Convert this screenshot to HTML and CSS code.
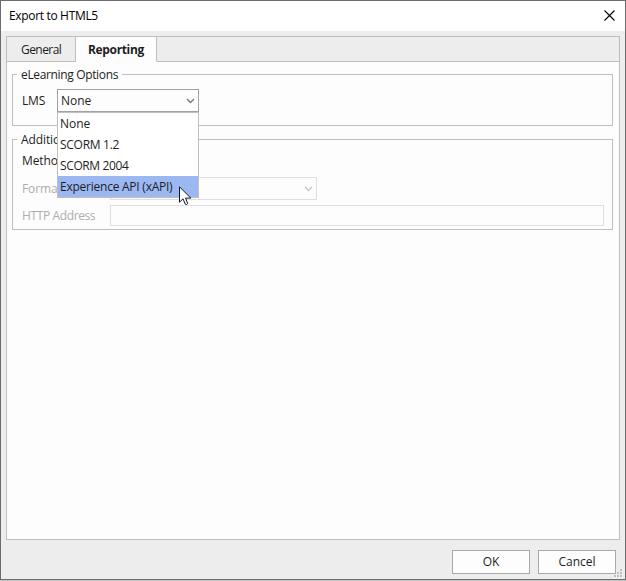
FILE: index.html
```html
<!DOCTYPE html>
<html lang="en">
<head>
<meta charset="utf-8">
<title>Export to HTML5</title>
<link rel="stylesheet" href="styles.css">
</head>
<body>
<div class="window">
  <header class="titlebar">
    <span class="title">Export to HTML5</span>
    <svg class="close" width="11" height="11" viewBox="0 0 11 11"><path d="M.5 .5 10.5 10.5M10.5 .5 .5 10.5"/></svg>
  </header>
  <main class="panel">
    <nav class="tabs">
      <div class="tab"><span class="t-general">General</span></div>
      <div class="tab active"><span class="t-reporting">Reporting</span></div>
      <div class="tab-rest"></div>
    </nav>
    <div class="content">
      <fieldset class="group elearning">
        <legend><span class="t-elearning">eLearning Options</span></legend>
        <div class="row lms">
          <label class="label"><span class="t-lms">LMS</span></label>
          <div class="combo">
            <span>None</span>
            <svg class="chevron" width="9" height="6" viewBox="0 0 9 6"><path d="M1 1 4.5 4.5 8 1"/></svg>
            <ul class="menu">
              <li><span>None</span></li>
              <li><span class="t-s12">SCORM 1.2</span></li>
              <li><span class="t-s2004">SCORM 2004</span></li>
              <li class="selected"><span class="t-xapi">Experience API (xAPI)</span></li>
            </ul>
            <svg class="cursor" width="13" height="20" viewBox="0 0 13 20"><path d="M.5 .8V16.2L4 12.8 6.3 18.2Q7.5 19.2 8.7 17.6L6.6 12.1H11.8Z"/></svg>
          </div>
        </div>
      </fieldset>
      <fieldset class="group additional">
        <legend><span class="t-add">Additional</span></legend>
        <div class="row method"><label class="label"><span class="t-method">Method</span></label></div>
        <div class="row format disabled">
          <label class="label"><span class="t-format">Format</span></label>
          <div class="combo"><svg class="chevron" width="9" height="6" viewBox="0 0 9 6"><path d="M1 1 4.5 4.5 8 1"/></svg></div>
        </div>
        <div class="row address disabled">
          <label class="label"><span class="t-http">HTTP Address</span></label>
          <div class="input"></div>
        </div>
      </fieldset>
    </div>
  </main>
  <footer class="footer">
    <button class="button">OK</button>
    <button class="button">Cancel</button>
    <svg class="grip" width="8" height="8" viewBox="0 0 8 8"><path d="M6 0h2v2h-2zM3 3h2v2h-2zM6 3h2v2h-2zM0 6h2v2h-2zM3 6h2v2h-2zM6 6h2v2h-2z"/></svg>
  </footer>
</div>
</body>
</html>
```
FILE: styles.css
```css
* { box-sizing: border-box; }
body {
  margin: 0;
  background: #c4c4c4;
  font: 12px/16px "Open Sans", "Noto Sans", sans-serif;
  color: #1e1e1e;
}
.window {
  width: 626px;
  height: 580px;
  display: flex;
  flex-direction: column;
  background: #ededed;
  border: 1px solid #6d6b6e;
}
.titlebar {
  height: 30px;
  padding: 0 10px 0 8px;
  display: flex;
  align-items: center;
  justify-content: space-between;
  background: #fff;
  color: #000;
}
span { white-space: nowrap; }
svg { display: block; }
.title { letter-spacing: -.33px; }
.t-general { letter-spacing: -.55px; }
.t-reporting { letter-spacing: -.35px; }
.t-elearning { letter-spacing: -.35px; }
.t-lms { letter-spacing: -.2px; }
.t-s12 { letter-spacing: -.28px; }
.t-s2004 { letter-spacing: -.38px; }
.t-xapi { letter-spacing: -.24px; }
.t-http { letter-spacing: -.38px; }
.t-add, .t-method, .t-format { letter-spacing: -.1px; }
.close { position: relative; top: -1px; }
.close path { fill: none; stroke: #000; stroke-width: 1.1; }
.panel {
  height: 504px;
  margin: 5px 5px 0;
  display: flex;
  flex-direction: column;
  background: #fdfdfd;
  border: 1px solid #bfbfbf;
}
.tabs { height: 25px; display: flex; }
.tab {
  width: 69px;
  display: flex;
  align-items: center;
  padding: 2px 0 0 14px;
  background: #ededed;
  border-right: 1px solid #bfbfbf;
  border-bottom: 1px solid #bfbfbf;
}
.tab.active {
  width: 81px;
  padding-left: 12px;
  background: #fdfdfd;
  border-bottom-color: #fdfdfd;
  font-weight: 700;
}
.tab-rest { flex: 1; background: #ededed; border-bottom: 1px solid #bfbfbf; }
.content { padding: 5px 6px 0 5px; }
.group {
  margin: 0;
  min-width: 0;
  border: 1px solid #bfbfbf;
  padding: 0;
}
.elearning { height: 59px; }
.additional { height: 98px; margin-top: 6px; }
legend { height: 15px; line-height: 15px; margin-left: 4px; padding: 0 4px; }
.row { display: flex; align-items: center; padding-left: 9px; }
.lms { height: 23px; margin-top: 7px; }
.lms .label { width: 35px; }
.combo {
  position: relative;
  width: 142px;
  height: 23px;
  padding: 0 3px;
  display: flex;
  align-items: center;
  background: #fdfdfd;
  border: 1px solid #a3a3a3;
}
.chevron { margin-left: auto; }
.chevron path { fill: none; stroke: #777; stroke-width: 1.3; }
.menu {
  position: absolute;
  z-index: 1;
  top: 22px;
  left: -1px;
  width: 142px;
  height: 86px;
  margin: 0;
  padding: 0;
  list-style: none;
  background: #fff;
  border: 1px solid #bfbfbf;
}
.menu li { height: 21px; padding: 0 2px; display: flex; align-items: center; }
.menu .selected { background: #9cb8f3; }
.cursor { position: absolute; z-index: 2; top: 96px; left: 121px; }
.cursor path { fill: #fff; stroke: #10142a; }
.method { height: 17px; margin-top: 5px; }
.format { height: 23px; margin-top: 8px; }
.address { height: 21px; margin-top: 5px; }
.additional .label { width: 88px; }
.format .combo { width: 207px; border-color: #dfdfdf; }
.disabled { color: #aeaeae; }
.disabled .chevron path { stroke: #c4c4c4; }
.input { width: 494px; height: 21px; background: #fdfdfd; border: 1px solid #dfdfdf; }
.footer {
  position: relative;
  display: flex;
  justify-content: flex-end;
  gap: 8px;
  padding: 10px 9px 0 0;
}
.button {
  width: 78px;
  height: 24px;
  padding: 0;
  font: inherit;
  color: inherit;
  background: #fdfdfd;
  border: 1px solid #a9a9a9;
}
.grip { position: absolute; right: 3px; top: 29px; }
.grip path { fill: #bfbfbf; }
```
